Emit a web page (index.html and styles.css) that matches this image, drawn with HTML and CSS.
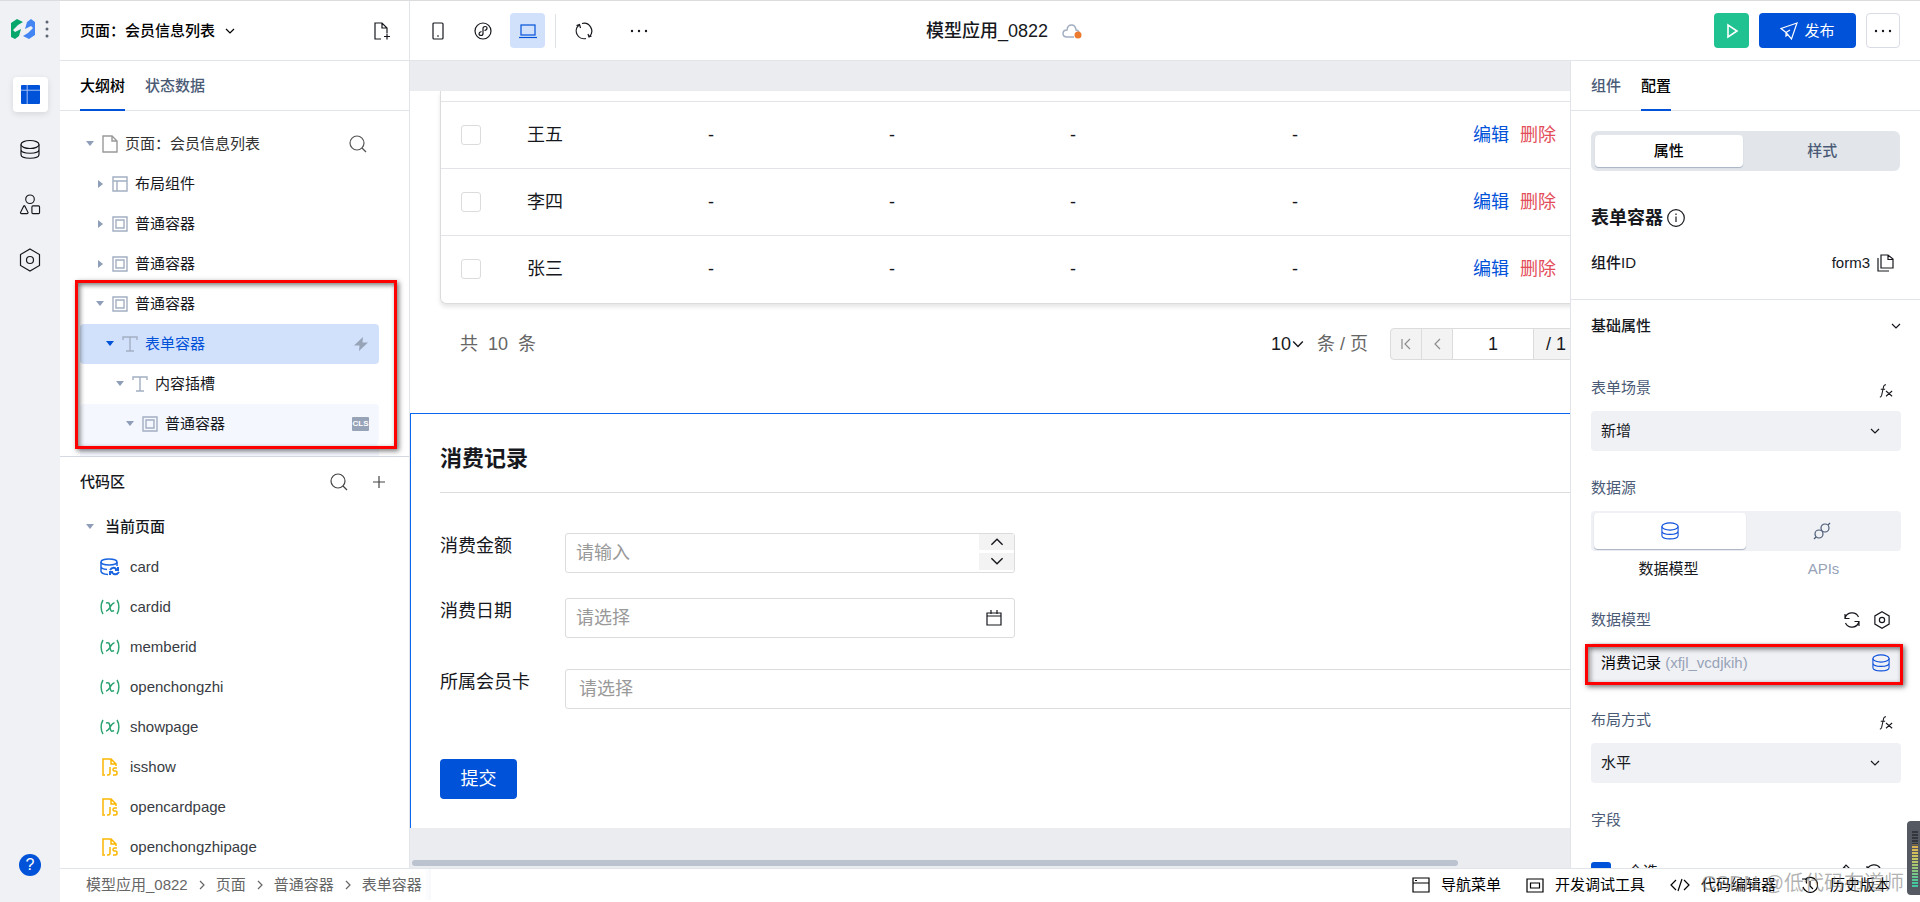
FILE: index.html
```html
<!DOCTYPE html>
<html lang="zh-CN">
<head>
<meta charset="utf-8">
<title>模型应用_0822</title>
<link rel="stylesheet" href="styles.css">
</head>
<body>
<svg class="sprite" aria-hidden="true">
  <symbol id="chev" viewBox="0 0 10 10"><path d="M1 3l4 4 4-4"/></symbol>
  <symbol id="chev-r" viewBox="0 0 10 10"><path d="M3 1l4 4-4 4"/></symbol>
  <symbol id="search" viewBox="0 0 18 18"><circle cx="8" cy="8" r="7"/><path d="M13 13l4 4"/></symbol>
  <symbol id="db" viewBox="0 0 20 20"><ellipse cx="10" cy="5" rx="9" ry="4"/><path d="M1 5v10c0 5 18 5 18 0V5M1 10c0 5 18 5 18 0"/></symbol>
  <symbol id="caret-d" viewBox="0 0 8 8"><path d="M0 1h8L4 6z"/></symbol>
  <symbol id="caret-r" viewBox="0 0 8 8"><path d="M2 0l5 4-5 4z"/></symbol>
  <symbol id="box" viewBox="0 0 16 16"><path d="M1 1h14v14H1zM4 4h8v8H4z"/></symbol>
  <symbol id="layout" viewBox="0 0 16 16"><path d="M1 1h14v14H1zM1 5h14M5 5v10"/></symbol>
  <symbol id="text" viewBox="0 0 16 16"><path d="M1 4V1h14v3M8 1v14M4 15h8"/></symbol>
  <symbol id="file" viewBox="0 0 16 18"><path d="M1 1h9l5 5v11H1zM10 1v5h5"/></symbol>
  <symbol id="var" viewBox="0 0 20 16"><path d="M3 1C.5 5 .5 11 3 15M17 1c2.500 4 2.500 10 0 14M6 4c3-1 3.500 0 4 4s1 5 4 3.500M14.500 4C11 3.500 10 11.500 6 12"/></symbol>
  <symbol id="js" viewBox="0 0 16 18"><path d="M3 17H1V1h8l5 5v2M9 1v5h5M8 9v6q0 2-2 2H5M15 10h-2.500q-1.500 0-1.500 1.500T12.500 13h1q1.500 0 1.500 2t-1.500 2H11"/></symbol>
  <symbol id="dbsync" viewBox="0 0 20 18"><ellipse cx="9" cy="4" rx="8" ry="3"/><path d="M1 4v9q0 3 7 3.500M1 8.500q0 2.500 6 3M17 4v4"/><path class="thick" d="M10 12q2-3 5-2l2 2M18 9v3h-3M19 14q-2 3-5 2l-3-2M10 17v-3h3"/></symbol>
  <symbol id="fx" viewBox="0 0 16 16"><path d="M8 1Q5.500.500 5 4L3 13q-.500 2-2 2M2 6h5M8 8l7 6M15 8l-7 6"/></symbol>
  <symbol id="sync" viewBox="0 0 18 18"><path d="M2 7.500A7.200 7.200 0 0 1 15.500 6M16 10.500A7.200 7.200 0 0 1 2.500 12M2 3v4.500h4.500M16 15v-4.500h-4.500"/></symbol>
  <symbol id="hex" viewBox="0 0 22 24"><path d="M11 1l9.500 5.500v11L11 23l-9.500-5.500v-11z"/><circle cx="11" cy="12" r="3.500"/></symbol>
  <symbol id="dots" viewBox="0 0 18 4"><circle cx="2" cy="2" r="1.200"/><circle cx="9" cy="2" r="1.200"/><circle cx="16" cy="2" r="1.200"/></symbol>
</svg>

<div class="app">
  <nav class="rail" aria-label="主导航">
    <div class="brand">
      <svg class="logo" viewBox="0 0 24 20"><path fill="#07a66b" d="M0 4L6 0l6 3-5 3-5 5 2 2 6-3-2 7-4 3-6-3z"/><path fill="#4485f4" d="M24 16l-6 4-6-3 5-3 5-5-2-2-6 3 2-7 4-3 4 3z"/></svg>
      <svg class="vdots" viewBox="0 0 4 18"><circle cx="2" cy="2" r="1.500"/><circle cx="2" cy="9" r="1.500"/><circle cx="2" cy="16" r="1.500"/></svg>
    </div>
    <button class="rail-btn active" aria-label="页面"><svg class="fill" viewBox="0 0 20 20"><path fill="#0052d9" d="M1 0h18q1 0 1 1v18q0 1-1 1H1q-1 0-1-1V1q0-1 1-1z"/><path fill="none" stroke="#a9c4f5" d="M0 5.500h20M6.500 0v20"/></svg></button>
    <button class="rail-btn" aria-label="数据"><svg class="ic" viewBox="0 0 22 20"><use href="#db" width="22" height="20"/></svg></button>
    <button class="rail-btn" aria-label="素材"><svg class="ic" viewBox="0 0 22 22"><circle cx="11" cy="5.500" r="4.500"/><path d="M5.500 12.500q-.500-.500-1 0l-3.500 7q0 1 1 1h6q1 0 1-1zM14 12.500h6q1 0 1 1v6q0 1-1 1h-6q-1 0-1-1v-6q0-1 1-1z"/></svg></button>
    <button class="rail-btn" aria-label="设置"><svg class="ic tall"><use href="#hex"/></svg></button>
    <button class="help" aria-label="帮助">?</button>
  </nav>

  <header class="topbar">
    <div class="page-pick">
      <button class="page-name">页面：会员信息列表 <svg class="ic s10"><use href="#chev"/></svg></button>
      <button class="plain" aria-label="新建页面"><svg class="ic s18" viewBox="0 0 18 18"><path d="M8 17H2V1h7l5 5v5M9 1v5h5M14 11.500v6M11 14.500h6"/></svg></button>
    </div>
    <div class="devices">
      <button class="dev" aria-label="手机"><svg class="ic s18" viewBox="0 0 18 18"><rect x="4" y="1" width="10" height="16" rx="1"/><path d="M8 14h2"/></svg></button>
      <button class="dev" aria-label="小程序"><svg class="ic s18" viewBox="0 0 18 18"><circle cx="9" cy="9" r="8"/><path d="M10.500 8.500q2.500-.500 2.500-2.300T11 4.500 9 6.500v5q0 2-2 2t-2-1.700 2.500-2.300"/></svg></button>
      <button class="dev on" aria-label="电脑"><svg class="ic s18" viewBox="0 0 18 18"><rect x="2" y="3" width="14" height="10"/><path d="M0 15.500h18"/></svg></button>
      <span class="bar"></span>
      <button class="dev" aria-label="刷新"><svg class="ic s18" viewBox="0 0 18 18"><path d="M11 16.500A7.800 7.800 0 0 1 4 3M7 1.500A7.800 7.800 0 0 1 14.500 14.500M1.500 3.500L4.500 2.500l1 3.500M16.500 14l-2.500 1-1-3"/></svg></button>
      <button class="dev more" aria-label="更多"><svg class="dots"><use href="#dots"/></svg></button>
    </div>
    <h1 class="app-title">模型应用_0822 <svg class="cloud" viewBox="0 0 20 16"><path fill="none" stroke="#a3aec2" stroke-width="1.500" d="M12 14H5q-4 0-4-3.500T5 7q.500-5 4.500-5T14 7q2 0 3 2"/><circle cx="16" cy="12" r="3.500" fill="#ed7b2f"/></svg></h1>
    <div class="actions">
      <button class="play" aria-label="预览"><svg class="ic s18" viewBox="0 0 18 18"><path d="M5 3v12l9-6z"/></svg></button>
      <button class="publish"><svg class="ic s18" viewBox="0 0 18 18"><path d="M17 1L1 6.500l5 4L11.500 17zM6 10.500L10 8M6 10.500V14l2-1.500"/></svg>发布</button>
      <button class="more-btn" aria-label="更多操作"><svg class="dots"><use href="#dots"/></svg></button>
    </div>
  </header>

  <aside class="left">
    <div class="tabs" role="tablist"><button class="tab sel" role="tab">大纲树</button><button class="tab" role="tab">状态数据</button></div>
    <div class="tree">
      <ul>
        <li class="row l0"><svg class="car"><use href="#caret-d"/></svg><svg class="ni"><use href="#file"/></svg><span>页面：会员信息列表</span><svg class="ic s18 end"><use href="#search"/></svg></li>
        <li class="row l1"><svg class="car"><use href="#caret-r"/></svg><svg class="ni"><use href="#layout"/></svg><span>布局组件</span></li>
        <li class="row l1"><svg class="car"><use href="#caret-r"/></svg><svg class="ni"><use href="#box"/></svg><span>普通容器</span></li>
        <li class="row l1"><svg class="car"><use href="#caret-r"/></svg><svg class="ni"><use href="#box"/></svg><span>普通容器</span></li>
        <li class="row l1"><svg class="car"><use href="#caret-d"/></svg><svg class="ni"><use href="#box"/></svg><span>普通容器</span></li>
        <li class="row l2 picked"><svg class="car"><use href="#caret-d"/></svg><svg class="ni"><use href="#text"/></svg><span>表单容器</span><svg class="end bolt" viewBox="0 0 16 16"><path d="M10 1L1 9.500h5.500L6 15l9-8.500H9.500z"/></svg></li>
        <li class="row l3"><svg class="car"><use href="#caret-d"/></svg><svg class="ni"><use href="#text"/></svg><span>内容插槽</span></li>
        <li class="row l4 hover"><svg class="car"><use href="#caret-d"/></svg><svg class="ni"><use href="#box"/></svg><span>普通容器</span><b class="end cls">CLS</b></li>
        <li class="row hover"></li>
      </ul>
      <div class="mark mark-tree"></div>
    </div>
    <section class="code">
      <div class="code-head"><h2>代码区</h2><button class="plain" aria-label="搜索"><svg class="ic s18"><use href="#search"/></svg></button><button class="plain" aria-label="新建"><svg class="ic s12" viewBox="0 0 12 12"><path d="M6 0v12M0 6h12"/></svg></button></div>
      <ul>
        <li class="row l0 group"><svg class="car"><use href="#caret-d"/></svg><span>当前页面</span></li>
        <li class="row item blue"><svg><use href="#dbsync"/></svg><span>card</span></li>
        <li class="row item green"><svg><use href="#var"/></svg><span>cardid</span></li>
        <li class="row item green"><svg><use href="#var"/></svg><span>memberid</span></li>
        <li class="row item green"><svg><use href="#var"/></svg><span>openchongzhi</span></li>
        <li class="row item green"><svg><use href="#var"/></svg><span>showpage</span></li>
        <li class="row item gold"><svg><use href="#js"/></svg><span>isshow</span></li>
        <li class="row item gold"><svg><use href="#js"/></svg><span>opencardpage</span></li>
        <li class="row item gold"><svg><use href="#js"/></svg><span>openchongzhipage</span></li>
      </ul>
    </section>
  </aside>

  <main class="canvas">
    <div class="page">
      <div class="table-card">
        <table>
          <colgroup><col class="c-check"><col class="c-mid"><col class="c-mid"><col class="c-mid"><col class="c-wide"><col class="c-mid"><col></colgroup>
          <tbody>
            <tr><td><input type="checkbox" aria-label="王五"></td><td>王五</td><td>-</td><td>-</td><td>-</td><td>-</td><td><a href="#">编辑</a><a href="#" class="del">删除</a></td></tr>
            <tr><td><input type="checkbox" aria-label="李四"></td><td>李四</td><td>-</td><td>-</td><td>-</td><td>-</td><td><a href="#">编辑</a><a href="#" class="del">删除</a></td></tr>
            <tr><td><input type="checkbox" aria-label="张三"></td><td>张三</td><td>-</td><td>-</td><td>-</td><td>-</td><td><a href="#">编辑</a><a href="#" class="del">删除</a></td></tr>
          </tbody>
        </table>
      </div>
      <div class="pager">
        <span class="total">共&nbsp; 10 &nbsp;条</span>
        <button class="size">10<svg class="ic s12"><use href="#chev"/></svg></button>
        <span class="unit">条 / 页</span>
        <div class="pages">
          <button aria-label="首页"><svg class="ic s12" viewBox="0 0 12 12"><path d="M2 1v10M10 1L5 6l5 5"/></svg></button>
          <button aria-label="上一页"><svg class="ic s12" viewBox="0 0 12 12"><path d="M9 1L4 6l5 5"/></svg></button>
          <input type="text" value="1" aria-label="页码">
          <span>/ 1</span>
        </div>
      </div>
      <form class="form">
        <h2>消费记录</h2>
        <div class="f-row"><label for="amount">消费金额</label>
          <div class="f-box"><input id="amount" type="text" placeholder="请输入"><div class="steps"><button type="button" aria-label="增加"><svg class="ic s14 flip"><use href="#chev"/></svg></button><button type="button" aria-label="减少"><svg class="ic s14"><use href="#chev"/></svg></button></div></div></div>
        <div class="f-row"><label for="date">消费日期</label>
          <div class="f-box"><input id="date" type="text" placeholder="请选择"><svg class="ic cal" viewBox="0 0 16 16"><path d="M1 3h14v12H1zM1 6h14M5 0v4M11 0v4"/></svg></div></div>
        <div class="f-row"><label for="member">所属会员卡</label>
          <div class="f-box full"><input id="member" type="text" placeholder="请选择"></div></div>
        <button type="button" class="submit">提交</button>
      </form>
    </div>
    <div class="scroll"></div>
  </main>

  <aside class="right">
    <div class="tabs" role="tablist"><button class="tab" role="tab">组件</button><button class="tab sel" role="tab">配置</button></div>
    <div class="cfg-top">
      <div class="seg"><button class="on">属性</button><button>样式</button></div>
      <h2 class="cfg-title">表单容器<svg class="ic s18" viewBox="0 0 18 18"><circle cx="9" cy="9" r="8.300"/><path d="M9 7.500V13M9 4.500v1.500"/></svg></h2>
      <div class="id-row"><b>组件ID</b><span>form3</span><svg class="ic s18" viewBox="0 0 18 18"><path d="M5 1h7l5 4v9H5zM12 1v4.500h5M2 4v13h11"/></svg></div>
    </div>
    <div class="cfg">
      <h3 class="sec">基础属性<svg class="ic s10"><use href="#chev"/></svg></h3>
      <div class="field"><div class="lab lab-fx"><label for="scene">表单场景</label><svg class="ic s14 fx"><use href="#fx"/></svg></div>
        <div class="pick"><select id="scene"><option>新增</option></select><svg class="ic s10"><use href="#chev"/></svg></div></div>
      <div class="field"><div class="lab"><span>数据源</span></div>
        <div class="seg light"><button class="on" aria-label="数据模型"><svg class="ic s18"><use href="#db"/></svg></button><button aria-label="APIs"><svg class="ic s18" viewBox="0 0 18 18"><circle cx="6" cy="12" r="4"/><circle cx="12" cy="6" r="4"/><path d="M3 15l-2 2M15 3l2-2"/></svg></button></div>
        <div class="under"><span>数据模型</span><span class="dim">APIs</span></div></div>
      <div class="field"><div class="lab"><label for="model">数据模型</label><svg class="ic s18"><use href="#sync"/></svg><svg class="ic s18 hx"><use href="#hex"/></svg></div>
        <button class="model" id="model"><span>消费记录 <i>(xfjl_vcdjkih)</i></span><svg class="ic s18"><use href="#db"/></svg></button><div class="mark mark-model"></div></div>
      <div class="field"><div class="lab lab-fx"><label for="lay">布局方式</label><svg class="ic s14 fx"><use href="#fx"/></svg></div>
        <div class="pick"><select id="lay"><option>水平</option></select><svg class="ic s10"><use href="#chev"/></svg></div></div>
      <div class="field"><div class="lab"><span>字段</span></div>
        <div class="all"><label><input type="checkbox" checked>全选</label><svg class="ic s18" viewBox="0 0 18 18"><path d="M2 16l1-5 8-9 4 4-8 9zM9 4l4 4"/></svg><svg class="ic s18"><use href="#sync"/></svg></div></div>
    </div>
  </aside>

  <footer class="foot">
    <nav class="crumbs" aria-label="路径"><a href="#">模型应用_0822</a><svg class="ic s10"><use href="#chev-r"/></svg><a href="#">页面</a><svg class="ic s10"><use href="#chev-r"/></svg><a href="#">普通容器</a><svg class="ic s10"><use href="#chev-r"/></svg><a href="#">表单容器</a></nav>
    <div class="tools">
      <button><svg class="ic s18" viewBox="0 0 18 18"><path d="M1 2h16v14H1zM1 7h16M3 4.500h2"/></svg>导航菜单</button>
      <button><svg class="ic s18" viewBox="0 0 18 18"><path d="M1 3h16v13H1zM4.500 7h9v5h-9z"/></svg>开发调试工具</button>
      <button><svg class="ic wide" viewBox="0 0 20 18"><path d="M6 4L1 9l5 5M14 4l5 5-5 5M12 3L8 15"/></svg>代码编辑器</button>
      <button><svg class="ic s18" viewBox="0 0 18 18"><path d="M4 3.500A7.500 7.500 0 1 1 2 11M1 3h4.500v4.500M9 5v5l3 3"/></svg>历史版本</button>
    </div>
    <div class="watermark">CSDN @低代码布道师</div>
    <div class="meter"><i></i></div>
  </footer>
</div>
</body>
</html>
```
FILE: styles.css
```css
* { box-sizing: border-box; }
body, h1, h2, h3, ul { margin: 0; padding: 0; }
body {
  font: 15px/20px "Liberation Sans", "Noto Sans CJK SC", sans-serif;
  color: #16181d;
  background: #fff;
}
button, input, select { font: inherit; color: inherit; border: 0; background: none; padding: 0; margin: 0; }
button { display: flex; align-items: center; justify-content: center; }
a { color: inherit; text-decoration: none; }
li { list-style: none; }
svg { flex: none; }
.sprite { position: absolute; width: 0; height: 0; }
.ic { fill: none; stroke: currentColor; stroke-width: 1.2; }
.s10 { width: 10px; height: 10px; }
.s12 { width: 12px; height: 12px; }
.s14 { width: 14px; height: 14px; }
.s18 { width: 18px; height: 18px; }
.dots { width: 18px; height: 4px; fill: #16181d; }

.app {
  height: 100vh;
  display: grid;
  grid-template: 60px minmax(0, 1fr) 34px / 60px 350px minmax(0, 1fr) 350px;
  grid-template-areas: "rail top top top" "rail left main right" "rail foot foot foot";
  border-top: 1px solid #dcdcdf;
  overflow: hidden;
}

/* Rail */
.rail { grid-area: rail; background: #f0f1f5; display: flex; flex-direction: column; align-items: center; gap: 20px; padding-bottom: 26px; }
.brand { display: flex; gap: 10px; align-items: center; height: 56px; }
.logo { width: 24px; height: 20px; }
.vdots { width: 4px; height: 18px; fill: #5c6573; }
.rail-btn { width: 35px; height: 35px; border-radius: 4px; }
.rail-btn svg { width: 22px; height: 21px; }
.rail-btn .fill { width: 19px; height: 19px; }
.rail-btn .tall { height: 24px; }
.rail-btn.active { background: #fff; box-shadow: 0 2px 6px #0000001c; }
.help { margin-top: auto; width: 22px; height: 22px; border-radius: 50%; background: #0052d9; color: #fff; font-size: 16px; }

/* Top bar */
.topbar { grid-area: top; display: flex; align-items: center; border-bottom: 1px solid #e1e4e9; position: relative; }
.page-pick { width: 350px; height: 59px; border-right: 1px solid #e1e4e9; display: flex; align-items: center; justify-content: space-between; padding: 0 18px 0 20px; }
.page-name { gap: 10px; font-weight: 500; color: #000; }
.devices { display: flex; align-items: center; padding-left: 10px; gap: 10px; }
.dev { width: 35px; height: 35px; border-radius: 4px; }
.dev.on { background: #d2e1fb; color: #0052d9; }
.bar { width: 1px; height: 34px; background: #dfe2e8; }
.dev.more { margin-left: 10px; }
.app-title { position: absolute; left: 28px; right: 0; display: flex; justify-content: center; align-items: center; gap: 14px; font-size: 18px; font-weight: 500; pointer-events: none; }
.cloud { width: 20px; height: 16px; }
.actions { margin-left: auto; display: flex; gap: 10px; padding-right: 20px; }
.actions button { height: 35px; border-radius: 4px; }
.play { width: 35px; background: #1fc290; color: #fff; }
.play .ic { stroke-width: 1.6; }
.publish { width: 97px; background: #0052d9; color: #fff; gap: 6px; }
.more-btn { width: 34px; border: 1px solid #d9dce5; }

/* Tabs */
.tabs { height: 50px; display: flex; gap: 20px; padding: 0 20px; border-bottom: 1px solid #e1e4e9; }
.tab { height: 50px; color: #4b5b76; font-weight: 500; border-bottom: 2px solid transparent; border-top: 2px solid transparent; }
.tab.sel { color: #000; border-bottom-color: #0052d9; }

/* Left panel */
.left { grid-area: left; border-right: 1px solid #e1e4e9; display: flex; flex-direction: column; min-height: 0; }
.tree { height: 346px; flex: none; padding: 13px 30px 0 20px; border-bottom: 1px solid #d5d9e2; position: relative; }
.tree ul { height: 100%; overflow: hidden; }
.row { height: 40px; display: flex; align-items: center; border-radius: 4px; }
.l1 { padding-left: 10px; }
.l2 { padding-left: 20px; }
.l3 { padding-left: 30px; }
.l4 { padding-left: 40px; }
.car { width: 8px; height: 8px; margin: 0 6px; fill: #8f9eb8; }
.ni { width: 16px; height: 18px; margin: 0 7px 0 2px; fill: none; stroke: #a3aec2; stroke-width: 1.4; }
.end { margin-left: auto; }
.l0 .end { margin-right: 12px; color: #555; }
.l0 .ni { stroke: #999; }
.l0 { color: #333; }
.picked { background: #d2e1fb; color: #0052d9; }
.picked .car { fill: #0052d9; }
.hover { background: #f4f7fe; }
.bolt { width: 16px; height: 16px; fill: #97a3b7; margin-right: 10px; }
.cls { background: #97a3b7; color: #fff; font-size: 8px; line-height: 14px; width: 17px; text-align: center; border-radius: 1px; margin-right: 10px; }
.mark { position: absolute; border: 3px solid #f00; box-shadow: 2px 2px 5px #0008, inset 2px 2px 5px #0008; pointer-events: none; z-index: 2; }
.mark-tree { inset: 169px 12px 7px 15px; }
.code { overflow: hidden; padding: 0 20px; flex: 1; }
.code-head { height: 50px; display: flex; align-items: center; gap: 25px; padding-right: 4px; color: #444; }
.code-head h2 { font-size: 15px; font-weight: 500; margin-right: auto; color: #16181d; }
.group { font-weight: 500; color: #16181d; }
.group span { margin-left: 5px; }
.item { padding-left: 20px; gap: 10px; color: #383c43; }
.item svg { width: 20px; height: 18px; fill: none; stroke: currentColor; stroke-width: 1.5; }
.item.blue svg { color: #1b66e0; }
.item.green svg { color: #2ba471; }
.item.gold svg { color: #fbb600; }
.thick { stroke-width: 2; }

/* Canvas */
.canvas { grid-area: main; background: #ebecf0; overflow: hidden; padding-top: 30px; display: flex; flex-direction: column; }
.page { width: 1283px; background: #fff; font-size: 18px; line-height: 24px; }
.table-card { margin-left: 30px; padding-top: 10px; border: solid #dcdcdc; border-width: 0 0 1px 1px; border-radius: 0 0 0 6px; box-shadow: 0 3px 4px #0000001a; }
table { width: 100%; table-layout: fixed; border-collapse: collapse; }
.c-check { width: 70px; }
.c-mid { width: 181px; }
.c-wide { width: 222px; }
td { height: 67px; padding: 0 16px; border-top: 1px solid #e3e4e7; }
td:first-child { padding-left: 20px; }
td input { appearance: none; display: block; width: 20px; height: 20px; border: 1px solid #dcdcdc; border-radius: 3px; }
td a { color: #0052d9; margin-right: 11px; }
td .del { color: #e34d59; }
.pager { height: 109px; padding: 24px 0 0 50px; display: flex; align-items: flex-start; line-height: 32px; }
.total { color: #666; width: 811px; }
.size { gap: 1px; line-height: 32px; }
.unit { color: #666; width: 73px; margin-left: 13px; }
.pages { display: flex; width: 200px; height: 32px; border: 1px solid #dcdcdc; border-radius: 4px; background: #f3f3f3; line-height: 30px; }
.pages button { width: 31px; border-right: 1px solid #dcdcdc; color: #8c8c8c; }
.pages input { width: 81px; background: #fff; text-align: center; border-right: 1px solid #dcdcdc; }
.pages span { padding-left: 12px; }
.form { border: 1px solid #0b66ef; border-bottom: 0; padding: 0 29px 29px; }
.form h2 { font-size: 22px; line-height: 30px; padding: 30px 0 18px; border-bottom: 1px solid #dcdcdc; margin-bottom: 40px; }
.f-row { display: flex; margin-bottom: 25px; }
.f-row label { width: 125px; line-height: 26px; }
.f-row:nth-of-type(2) { margin-bottom: 31px; }
.f-box { width: 450px; height: 40px; border: 1px solid #dcdcdc; border-radius: 3px; display: flex; align-items: center; padding-left: 10px; }
.f-box.full { width: auto; flex: 1; padding-left: 13px; }
.f-box input { flex: 1; min-width: 0; outline: 0; }
.f-box input::placeholder { color: #999; opacity: 1; }
.steps { align-self: stretch; width: 35px; padding-bottom: 2px; display: grid; gap: 3px; }
.steps button { background: #f3f3f3; }
.steps .ic { stroke-width: 1; }
.flip { transform: rotate(180deg); }
.cal { width: 16px; height: 16px; margin-right: 12px; }
.submit { width: 77px; height: 40px; border-radius: 4px; background: #0052d9; color: #fff; margin-top: 50px; }
.scroll { margin: auto 112px 2px 2px; height: 6px; border-radius: 3px; background: #bac3cf; }

/* Right panel */
.right { grid-area: right; border-left: 1px solid #e1e4e9; overflow: hidden; }
.cfg-top { padding: 20px 20px 16px; border-bottom: 1px solid #e1e4e9; }
.seg { display: grid; grid-template-columns: 1fr 1fr; height: 40px; padding: 4px; background: #e2e6eb; border-radius: 6px; gap: 6px; font-weight: 500; color: #4b5b76; }
.seg .on { background: #fff; border-radius: 4px; box-shadow: 0 1px 1px #a8b2c2; color: #000; }
.seg.light { background: #f0f1f5; padding: 2px 3px; gap: 0; border-radius: 4px; }
.seg.light .on { color: #0b4fdc; }
.cfg-title { display: flex; align-items: center; gap: 4px; font-size: 18px; line-height: 30px; padding: 32px 0 10px; }
.id-row { height: 40px; display: flex; align-items: center; gap: 6px; padding-right: 6px; }
.id-row b { font-weight: 500; margin-right: auto; }
.cfg { padding: 0 19px 0 20px; }
.sec { height: 52px; margin-bottom: 19px; display: flex; align-items: center; justify-content: space-between; font-size: 15px; font-weight: 500; }
.field { margin-bottom: 20px; position: relative; }
.lab { height: 34px; margin-bottom: 6px; display: flex; align-items: center; gap: 12px; padding-right: 10px; color: #4b5b76; }
.lab-fx { padding-right: 8px; }
.lab label, .lab span { margin-right: auto; }
.lab svg { color: #16181d; }
.fx { align-self: flex-end; margin-bottom: 7px; }
.hx { stroke-width: 1.6; }
.pick { display: flex; align-items: center; background: #f0f1f5; border-radius: 4px; padding-right: 21px; }
.pick select { appearance: none; flex: 1; height: 40px; padding-left: 10px; }
.under { display: grid; grid-template-columns: 1fr 1fr; text-align: center; line-height: 32px; }
.under { padding-top: 2px; margin-bottom: -2px; }
.dim, .model i { color: #97a3b7; font-style: normal; }
.model { width: 100%; height: 40px; background: #f0f1f5; border-radius: 4px; justify-content: space-between; padding: 0 11px 0 10px; color: #000; }
.model .ic { color: #0b4fdc; }
.mark-model { inset: 41px -2px -2px -6px; }
.all { display: flex; align-items: center; gap: 12px; padding: 19px 18px 0 0; height: 39px; }
.all label { display: flex; align-items: center; gap: 17px; margin-right: auto; }
.all input { appearance: none; width: 20px; height: 20px; background: #0052d9; border-radius: 3px; }

/* Footer */
.foot { grid-area: foot; border-top: 1px solid #e1e4e9; background: #fff; display: flex; align-items: flex-start; justify-content: space-between; padding: 0 30px 0 26px; line-height: 31px; position: relative; }
.crumbs { display: flex; align-items: center; gap: 9px; color: #666; }
.crumbs a:last-child { padding-right: 9px; background: linear-gradient(90deg, #fff 90%, #f6f8fb); }
.tools { display: flex; gap: 25px; color: #000; line-height: 31px; }
.tools button { gap: 11px; }
.wide { width: 20px; height: 18px; }
.watermark { position: absolute; right: 16px; bottom: 3px; font-size: 20px; color: #77777790; }
.meter { position: absolute; right: 0; bottom: 7px; width: 13px; height: 74px; border-radius: 4px 0 0 4px; background: #555962; padding: 9px 2px 8px 5px; }
.meter i { display: block; height: 100%; background: repeating-linear-gradient(#555962 0 1px, transparent 1px 3px), linear-gradient(#33363d 25%, #e0b050 26%, #c8c860 50%, #40c8a0 95%); }
```
